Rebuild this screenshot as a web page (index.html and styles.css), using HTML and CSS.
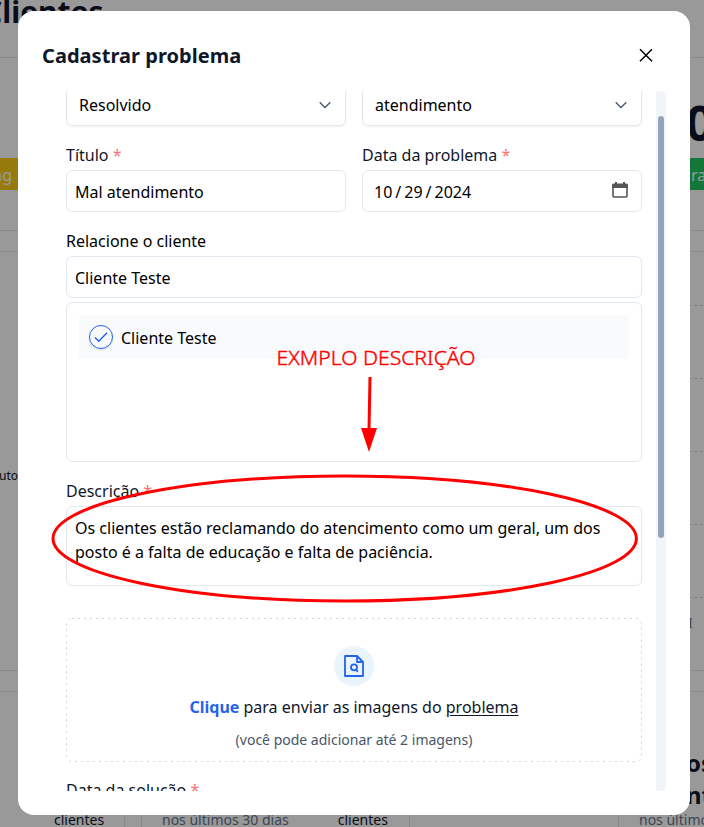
FILE: index.html
```
<!DOCTYPE html>
<html lang="pt-BR">
<head>
<meta charset="utf-8">
<title>Cadastrar problema</title>
<link rel="stylesheet" href="styles.css">
</head>
<body>
<div class="page">
  <header class="page-header"><h1>Clientes</h1></header>
  <section class="stats">
    <div class="stat"><span class="tag tag-yellow">ng</span></div>
    <div class="stat stat-right"><b class="big">0</b><span class="tag tag-green">ra</span></div>
  </section>
  <section class="chart">
    <span class="axis">uto</span>
    <div class="gridlines"><i></i><i></i><i></i><i></i><i></i><span>I</span></div>
  </section>
  <section class="bottom">
    <div class="card card-a"><p class="dark">clientes</p></div>
    <div class="card card-b"><p>nos últimos 30 dias</p><p class="dark">clientes</p></div>
    <div class="card card-c"><h2>os<br>nt</h2><p>nos últimos</p></div>
  </section>
</div>
<div class="overlay"></div>
<main class="modal">
  <div class="modal-head">
    <h2 class="modal-title">Cadastrar problema</h2>
    <svg class="close" viewBox="0 0 20 20"><path d="M4 4.2 16 16.2M16 4.2 4 16.2"/></svg>
  </div>
  <div class="scroller">
    <form class="form">
      <div class="row">
        <div class="field select"><span>Resolvido</span><svg viewBox="0 0 12 8"><path d="M.7 1.2 6 6.5 11.3 1.2"/></svg></div>
        <div class="field select"><span>atendimento</span><svg viewBox="0 0 12 8"><path d="M.7 1.2 6 6.5 11.3 1.2"/></svg></div>
      </div>
      <div class="row">
        <div class="group"><label>Título <em>*</em></label><div class="field">Mal atendimento</div></div>
        <div class="group"><label>Data da problema <em>*</em></label>
          <div class="field date"><span>10</span><span>/</span><span>29</span><span>/</span><span>2024</span>
            <svg viewBox="0 0 16 16"><path class="frame" d="M1 3.5v10.3q0 1.2 1.2 1.2h11.6q1.2 0 1.2-1.2V3.5"/><path class="top" d="M0 6V3q0-1.5 1.5-1.5H3V0h2v1.5h6V0h2v1.5h1.5Q16 1.5 16 3v3z"/></svg>
          </div>
        </div>
      </div>
      <div class="group">
        <label class="black">Relacione o cliente</label>
        <div class="field">Cliente Teste</div>
        <div class="list">
          <div class="option">
            <span class="check"><svg viewBox="0 0 14 12"><path d="M1 6.5 4.8 10.3 13 1.8"/></svg></span>
            <span>Cliente Teste</span>
          </div>
        </div>
      </div>
      <div class="group description">
        <label>Descrição <em>*</em></label>
        <div class="field area">Os clientes estão reclamando do atencimento como um geral, um dos posto é a falta de educação e falta de paciência.</div>
      </div>
      <div class="drop">
        <svg class="dashes" viewBox="0 0 576 144"><rect x=".5" y=".5" width="575" height="143" rx="5.5"/></svg>
        <span class="drop-icon"><svg viewBox="0 0 24 24"><path d="M3 2h12l6 6v14H3zM15 2v6h6"/><circle cx="12" cy="13.3" r="3"/><path d="m14 15.5 1.8 2.4"/></svg></span>
        <p class="drop-main"><b>Clique</b> para enviar as imagens do <u>problema</u></p>
        <p class="drop-sub">(você pode adicionar até 2 imagens)</p>
      </div>
      <label class="last">Data da solução <em>*</em></label>
    </form>
    <div class="track"><div class="thumb"></div></div>
  </div>
</main>
<svg class="notes" viewBox="0 0 704 827">
  <text x="276.5" y="365" textLength="199" lengthAdjust="spacingAndGlyphs">EXMPLO DESCRIÇÃO</text>
  <path class="line" d="M370 377 369 430"/>
  <path class="tip" d="M361 428h16l-8 24z"/>
  <ellipse class="ring" cx="344.7" cy="538.5" rx="291.7" ry="62.5"/>
</svg>
</body>
</html>
```
FILE: styles.css
```
* { box-sizing: border-box; }
body { margin: 0; width: 704px; height: 827px; overflow: hidden; position: relative; background: #fff; font: 16px/24px "Noto Sans", sans-serif; color: #0f172a; }
h1, h2, p { margin: 0; }
em { color: #f87171; font-style: normal; }

.page { width: 704px; height: 827px; overflow: hidden; display: flex; flex-direction: column; }
.page-header { height: 58px; flex: none; border-bottom: 1px solid #e2e8f0; }
.page-header h1 { font-size: 30px; line-height: 36px; margin: -6px 0 0 -17px; }
.stats { height: 173px; flex: none; display: flex; justify-content: space-between; border-bottom: 1px solid #e2e8f0; }
.stat { padding-top: 100px; }
.stat-right { width: 18px; padding-top: 36px; display: flex; flex-direction: column; }
.big { font-size: 48px; line-height: 58px; margin-bottom: 6px; }
.tag { display: block; width: 18px; height: 32px; line-height: 34px; color: #fff; overflow: hidden; }
.tag-yellow { background: #facc15; direction: rtl; padding-right: 6px; }
.tag-green { background: #22c55e; padding-left: 5px; }
.chart { height: 420px; flex: none; margin-top: 20px; display: flex; justify-content: space-between; border: solid #e2e8f0; border-width: 1px 0; }
.axis { font-size: 12px; padding-top: 212px; margin-left: -1px; }
.gridlines { width: 16px; padding-top: 53px; }
.gridlines i { display: block; height: 73px; background: repeating-linear-gradient(90deg, #d2d2d2 0 3px, transparent 3px 6px) 0 0 / 100% 1px no-repeat; }
.gridlines span { display: block; margin-top: -58px; font-size: 14px; color: #666; font-family: "Liberation Serif", serif; }
.bottom { flex: 1; margin-top: 20px; display: flex; border-top: 1px solid #e2e8f0; font-size: 14px; color: #64748b; }
.card { flex: none; padding-top: 116px; border-right: 1px solid #e2e8f0; }
.card-a { width: 125px; padding-left: 54px; }
.card-b { width: 269px; margin-left: 16px; border-left: 1px solid #e2e8f0; display: flex; padding-left: 20px; }
.card-b .dark { margin-left: 49px; }
.card-c { width: 120px; margin-left: 208px; border-left: 1px solid #e2e8f0; padding: 55px 0 0 20px; white-space: nowrap; }
.card-c h2 { font-size: 24px; line-height: 32px; padding-left: 47px; color: #0f172a; margin-bottom: -3px; }
.dark { color: #0f172a; }
.overlay { position: absolute; inset: 0; background: rgba(0, 0, 0, .4); }

.modal { position: absolute; left: 18px; top: 11px; width: 672px; height: 804px; padding: 24px; background: #fff; border-radius: 16px; }
.modal-head { height: 56px; display: flex; justify-content: space-between; padding-right: 10px; }
.modal-title { font-size: 20px; line-height: 42px; letter-spacing: .04px; }
.close { width: 20px; height: 20px; margin-top: 10px; fill: none; stroke: #000; stroke-width: 1.5; }
.scroller { height: 700px; overflow: hidden; display: flex; align-items: flex-start; justify-content: space-between; }
.form { width: 576px; margin: -7px 0 0 24px; display: flex; flex-direction: column; flex: none; }
.row { display: grid; grid-template-columns: 1fr 1fr; gap: 16px; margin-bottom: 17px; }
.group { display: flex; flex-direction: column; }
.description { margin-top: 17px; }
label { height: 24px; margin-bottom: 3px; }
.black { color: #000; }
.field { height: 42px; border: 1px solid #e2e8f0; border-radius: 6px; padding: 9px 8px 7px; color: #000; background: #fff; }
.select { display: flex; justify-content: space-between; align-items: center; padding: 0 14px 0 12px; box-shadow: 0 1px 2px rgba(0, 0, 0, .06); }
.select svg { width: 12px; height: 8px; fill: none; stroke: #475569; stroke-width: 1.3; }
.date { display: flex; gap: 3px; padding-left: 11px; padding-right: 13px; }
.date svg { width: 16px; height: 16px; margin: 2px 0 0 auto; }
.frame { fill: none; stroke: #555; stroke-width: 1.6; }
.top { fill: #555; }
.list { height: 160px; margin-top: 4px; border: 1px solid #e2e8f0; border-radius: 6px; padding: 12px; }
.option { height: 44px; display: flex; align-items: center; gap: 8px; padding: 1px 10px 0; background: #f8fafc; border-radius: 4px; color: #000; }
.check { width: 24px; height: 24px; margin-top: -2px; border: 1px solid #2563eb; border-radius: 50%; display: grid; place-items: center; box-shadow: 0 1px 2px rgba(0, 0, 0, .15); }
.check svg { width: 14px; height: 12px; fill: none; stroke: #2563eb; stroke-width: 1.5; }
.area { height: 80px; }
.drop { position: relative; height: 144px; margin: 32px 0 16px; display: flex; flex-direction: column; align-items: center; padding-top: 28px; }
.dashes { position: absolute; inset: 0; width: 576px; height: 144px; fill: none; stroke: #cbd5e1; stroke-dasharray: 2 4; }
.drop-icon { width: 40px; height: 40px; border-radius: 50%; background: #eaf4fd; display: grid; place-items: center; }
.drop-icon svg { width: 24px; height: 24px; fill: none; stroke: #2563eb; stroke-width: 1.8; stroke-linejoin: round; }
.drop-main { margin-top: 9px; }
.drop-main b { color: #2563eb; }
.drop-main u { text-underline-offset: 2px; }
.drop-sub { margin-top: 9px; font-size: 14px; color: #475569; }
.track { width: 10px; height: 700px; padding: 25px 2px 0; background: #f1f5f9; border-radius: 0 5px 5px 0; }
.thumb { height: 422px; border-radius: 3px; background: #94a3b8; }

.notes { position: absolute; inset: 0; width: 704px; height: 827px; }
.notes text { font: 300 20px "Noto Sans", sans-serif; fill: #f00; stroke: #f00; stroke-width: .4; }
.line, .ring { fill: none; stroke: #f00; stroke-width: 3; }
.tip { fill: #f00; }
```
